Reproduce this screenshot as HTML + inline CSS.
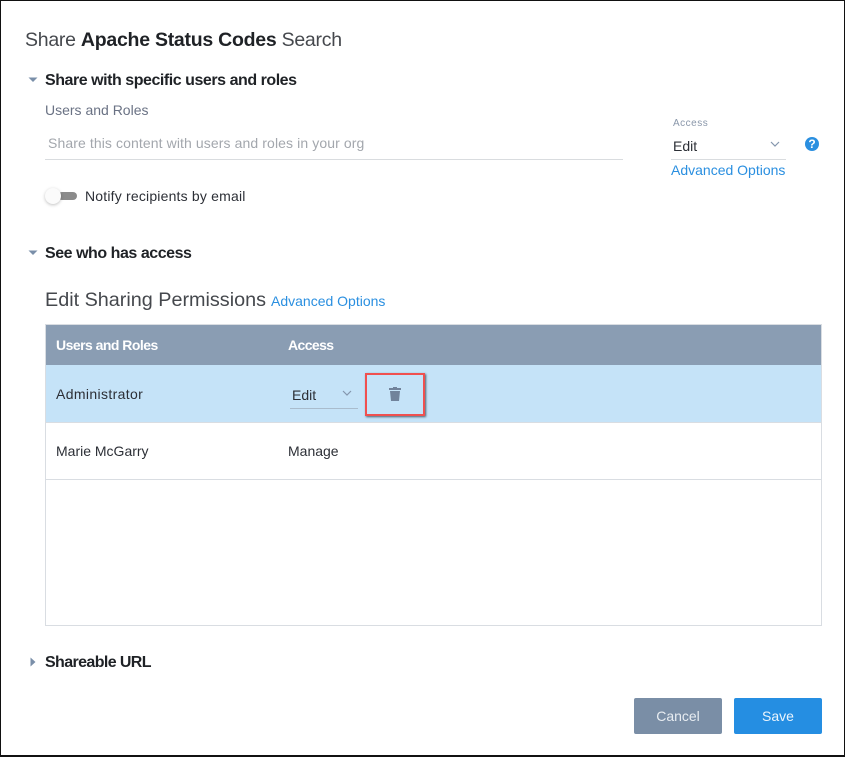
<!DOCTYPE html>
<html><head><meta charset="utf-8">
<style>
html,body{margin:0;padding:0;background:#fff}
#p{position:relative;width:845px;height:757px;overflow:hidden;background:#fff;font-family:"Liberation Sans",sans-serif;color:#23262c}
#p div,#p svg{position:absolute}
.t{white-space:nowrap;line-height:20px}
.h{font-size:16px;font-weight:bold;letter-spacing:-.46px;color:#1f2226}
.b{font-size:14px;color:#2c2f36}
.l{color:#2a8fe0;font-size:14px}
</style></head><body>
<div id="p">
<div style="left:0;top:0;width:1px;height:757px;background:#111"></div>
<div style="left:0;top:0;width:845px;height:1px;background:#111"></div>
<div style="left:844px;top:0;width:1px;height:757px;background:#111"></div>
<div style="left:0;top:755px;width:845px;height:2px;background:#111"></div>

<div class="t" style="left:25px;top:30px;font-size:19.5px;letter-spacing:-.26px;color:#45484d">Share <b style="color:#1f2226">Apache Status Codes</b> Search</div>

<svg style="left:28px;top:77px" width="10" height="6"><path d="M0.5 0.5H9.5L5 5Z" fill="#7a8fa9"/></svg>
<div class="t h" style="left:45px;top:71px">Share with specific users and roles</div>
<div class="t" style="left:45px;top:100px;font-size:14px;color:#6a7284">Users and Roles</div>
<div class="t" style="left:48px;top:133px;font-size:14px;letter-spacing:.1px;color:#a3a7ad">Share this content with users and roles in your org</div>
<div style="left:45px;top:159px;width:578px;height:1px;background:#d9dcdf"></div>

<div style="left:58px;top:192px;width:19px;height:8px;background:#8b8b8b;border-radius:4px"></div>
<div style="left:45px;top:188px;width:16px;height:16px;border-radius:50%;background:#fbfbfb;box-shadow:0 1px 3px rgba(0,0,0,.25)"></div>
<div class="t b" style="left:85px;top:186px;letter-spacing:.19px">Notify recipients by email</div>

<div class="t" style="left:673px;top:114px;font-size:10px;letter-spacing:.5px;color:#8a97aa">Access</div>
<div class="t b" style="left:673px;top:136px">Edit</div>
<svg style="left:770px;top:141px" width="10" height="7"><path d="M1 1L5 5L9 1" fill="none" stroke="#8496ad" stroke-width="1.2"/></svg>
<div style="left:671px;top:159px;width:115px;height:1px;background:#d9dcdf"></div>
<div class="t l" style="left:671px;top:160px">Advanced Options</div>
<div style="left:805px;top:137px;width:14px;height:14px;border-radius:50%;background:#2a8fe0;color:#fff;font-size:12px;font-weight:bold;line-height:14px;text-align:center">?</div>

<svg style="left:28px;top:250px" width="10" height="6"><path d="M0.5 0.5H9.5L5 5Z" fill="#7a8fa9"/></svg>
<div class="t h" style="left:45px;top:244px">See who has access</div>

<div class="t" style="left:45px;top:290px;font-size:19.8px;color:#45484d">Edit Sharing Permissions</div>
<div class="t l" style="left:271px;top:291px">Advanced Options</div>

<div style="left:45px;top:324px;width:775px;height:300px;border:1px solid #d9dde2"></div>
<div style="left:46px;top:325px;width:775px;height:40px;background:#8a9db3"></div>
<div class="t" style="left:56px;top:335px;font-size:14px;font-weight:bold;color:#fff;letter-spacing:-.53px">Users and Roles</div>
<div class="t" style="left:288px;top:335px;font-size:14px;font-weight:bold;color:#fff;letter-spacing:-.6px">Access</div>

<div style="left:46px;top:365px;width:775px;height:57px;background:#c5e3f8"></div>
<div style="left:46px;top:422px;width:775px;height:1px;background:#d9dde2"></div>
<div class="t b" style="left:56px;top:384px;letter-spacing:.36px">Administrator</div>
<div class="t b" style="left:292px;top:385px">Edit</div>
<svg style="left:342px;top:390px" width="10" height="7"><path d="M1 1L5 5L9 1" fill="none" stroke="#8496ad" stroke-width="1.2"/></svg>
<div style="left:290px;top:408px;width:68px;height:1px;background:#a9bccd"></div>

<div style="left:365px;top:373px;width:56px;height:39px;border:2px solid #f0504f;box-shadow:1px 1px 2px rgba(40,50,60,.75)"></div>
<svg style="left:388px;top:386px" width="14" height="16" viewBox="0 0 14 16"><path d="M5 1H9V2H13V4H1V2H5ZM2 5H12L11 15H3Z" fill="#71839b"/></svg>

<div class="t b" style="left:56px;top:441px">Marie McGarry</div>
<div class="t b" style="left:288px;top:441px">Manage</div>
<div style="left:46px;top:479px;width:775px;height:1px;background:#d9dde2"></div>

<svg style="left:30px;top:657px" width="6" height="10"><path d="M0.5 0.5V9.5L5.5 5Z" fill="#7a8fa9"/></svg>
<div class="t h" style="left:45px;top:653px;letter-spacing:-.61px">Shareable URL</div>

<div class="t" style="left:634px;top:698px;width:88px;height:36px;line-height:36px;background:#7a8ea6;border-radius:2px;color:#e8edf2;font-size:14px;text-align:center">Cancel</div>
<div class="t" style="left:734px;top:698px;width:88px;height:36px;line-height:36px;background:#258ee2;border-radius:2px;color:#eaf4fc;font-size:14px;text-align:center">Save</div>
</div>
</body></html>
